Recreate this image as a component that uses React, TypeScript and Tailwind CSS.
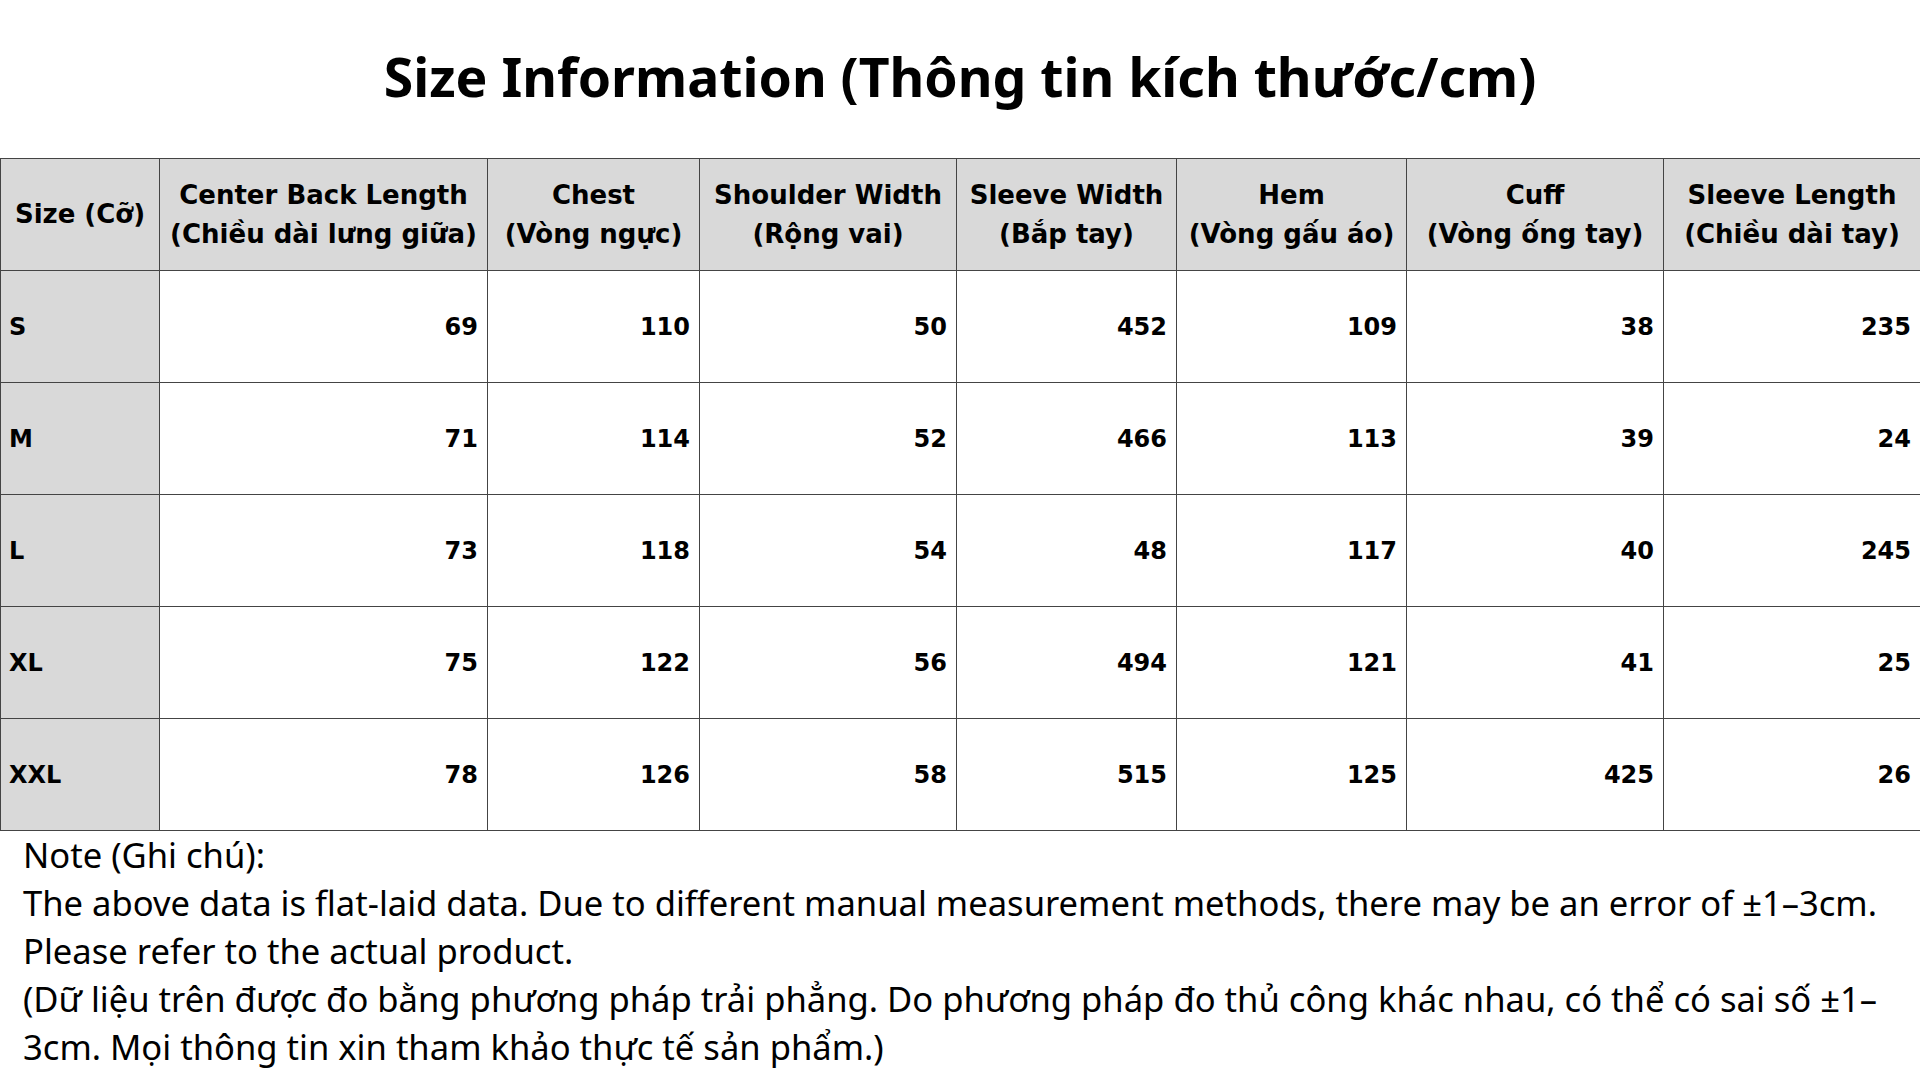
const headers: [string, string | null][] = [
  ["Size (Cỡ)", null],
  ["Center Back Length", "(Chiều dài lưng giữa)"],
  ["Chest", "(Vòng ngực)"],
  ["Shoulder Width", "(Rộng vai)"],
  ["Sleeve Width", "(Bắp tay)"],
  ["Hem", "(Vòng gấu áo)"],
  ["Cuff", "(Vòng ống tay)"],
  ["Sleeve Length", "(Chiều dài tay)"],
];

const rows: [string, number[]][] = [
  ["S", [69, 110, 50, 452, 109, 38, 235]],
  ["M", [71, 114, 52, 466, 113, 39, 24]],
  ["L", [73, 118, 54, 48, 117, 40, 245]],
  ["XL", [75, 122, 56, 494, 121, 41, 25]],
  ["XXL", [78, 126, 58, 515, 125, 425, 26]],
];

const widths = ["w-[159px]", "w-[328px]", "w-[212px]", "w-[257px]", "w-[220px]", "w-[230px]", "w-[257px]", "w-[257px]"];

export default function App() {
  return (
    <div className="w-[1920px] h-[1080px] bg-white text-black overflow-hidden">
      <div className="h-[158px] pt-[50px] text-center">
        <h1 className="font-['Noto_Sans',sans-serif] font-bold text-[53.5px] leading-none">
          Size Information (Thông tin kích thước/cm)
        </h1>
      </div>

      <table className="w-full table-fixed border-collapse border border-[#666] font-['DejaVu_Sans',sans-serif]">
        <colgroup>
          {widths.map((w, i) => (
            <col key={i} className={w} />
          ))}
        </colgroup>
        <thead>
          <tr className="h-[112px] bg-[#d9d9d9]">
            {headers.map(([en, vi]) => (
              <th
                key={en}
                className="border border-[#444] px-1 text-center align-middle font-bold text-[26px] leading-[39px] whitespace-nowrap"
              >
                <div>{en}</div>
                {vi && <div>{vi}</div>}
              </th>
            ))}
          </tr>
        </thead>
        <tbody>
          {rows.map(([size, values]) => (
            <tr key={size} className="h-[112px]">
              <td className="border border-[#444] bg-[#d9d9d9] pl-2 text-left align-middle font-bold text-[24px]">
                {size}
              </td>
              {values.map((v, i) => (
                <td
                  key={i}
                  className="border border-[#444] pr-[9px] text-right align-middle font-bold text-[24px]"
                >
                  {v}
                </td>
              ))}
            </tr>
          ))}
        </tbody>
      </table>

      <div className="pl-[23px] font-['Noto_Sans',sans-serif] text-[34.6px] leading-[48px] whitespace-nowrap">
        <div>Note (Ghi chú):</div>
        <div>The above data is flat-laid data. Due to different manual measurement methods, there may be an error of ±1–3cm.</div>
        <div>Please refer to the actual product.</div>
        <div>(Dữ liệu trên được đo bằng phương pháp trải phẳng. Do phương pháp đo thủ công khác nhau, có thể có sai số ±1–</div>
        <div>3cm. Mọi thông tin xin tham khảo thực tế sản phẩm.)</div>
      </div>
    </div>
  );
}
